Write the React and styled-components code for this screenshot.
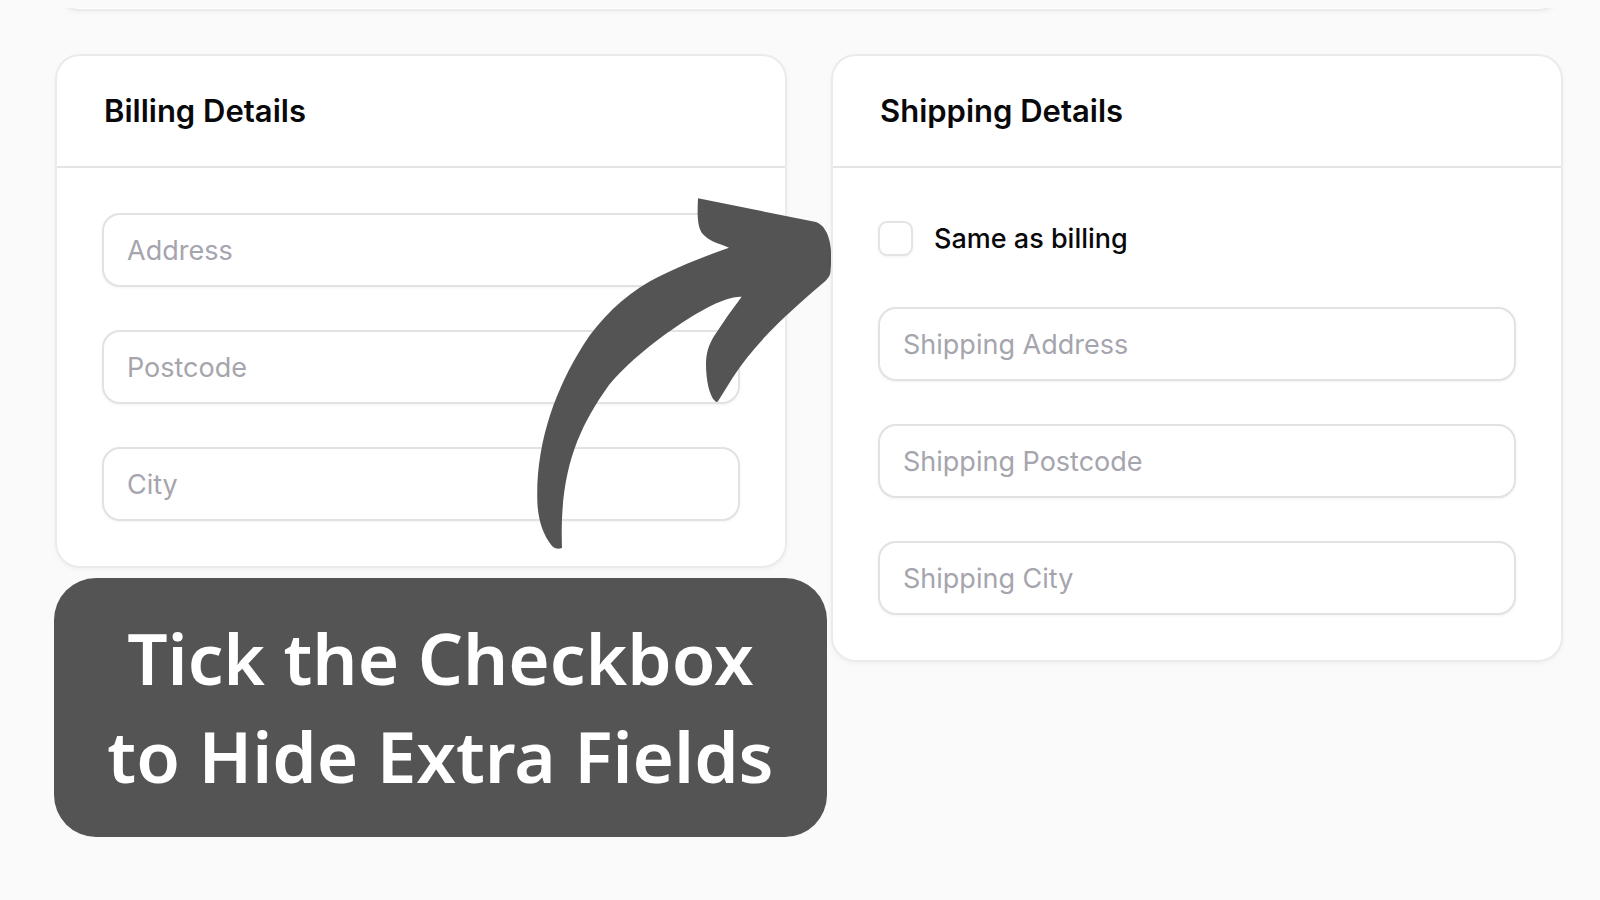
import React from "react";
import styled, { createGlobalStyle } from "styled-components";

const GlobalStyle = createGlobalStyle`
  *, *::before, *::after { box-sizing: border-box; }
  body {
    margin: 0;
    background: #fafafa;
    color: #09090b;
    font-family: Inter, "Liberation Sans", sans-serif;
  }
`;

const Page = styled.main`
  min-height: 100vh;
  padding: 8px 37px 40px 55px;
`;

const Surface = styled.section`
  background: #fff;
  border: 2px solid #ebebec;
  border-radius: 25px;
  box-shadow: 0 2px 4px rgba(0, 0, 0, 0.04);
`;

const PreviousSection = styled.div`
  display: flex;
  align-items: flex-end;
  height: 7px;
  padding-bottom: 4px;
  overflow: hidden;
`;

const PreviousCard = styled(Surface)`
  flex: 1;
  height: 60px;
`;

const Columns = styled.div`
  display: grid;
  grid-template-columns: 1fr 1fr;
  align-items: start;
  gap: 44px;
  margin-top: 39px;
`;

const Column = styled.div`
  position: relative;
  display: flex;
  flex-direction: column;
  gap: 10px;
`;

const CardHeader = styled.header`
  padding: 33px 47px;
  border-bottom: 2px solid #e4e4e5;
`;

const CardTitle = styled.h2`
  margin: 0;
  font-size: 31px;
  font-weight: 600;
  line-height: 44px;
`;

const CardBody = styled.div`
  display: flex;
  flex-direction: column;
  gap: 43px;
  padding: 45px;
`;

const TextField = styled.input`
  width: 100%;
  height: 74px;
  padding: 0 23px;
  border: 2px solid #e2e2e3;
  border-radius: 18px;
  background: #fff;
  box-shadow: 0 1px 3px rgba(0, 0, 0, 0.05);
  color: inherit;
  font: 400 27px Inter, "Liberation Sans", sans-serif;

  &::placeholder {
    color: #a5a5ae;
    opacity: 1;
  }
`;

const CheckRow = styled.label`
  display: flex;
  align-items: center;
  gap: 21px;
  height: 51px;
  font-size: 27px;
  font-weight: 500;
`;

const CheckBox = styled.input`
  appearance: none;
  width: 35px;
  height: 35px;
  margin: 0;
  border: 2px solid #e4e4e5;
  border-radius: 9px;
  background: #fff;
  box-shadow: 0 1px 3px rgba(0, 0, 0, 0.05);

  &:checked {
    background: #09090b;
  }
`;

const Callout = styled.p`
  margin: 0 -40px 0 -1px;
  padding: 31px 0 32px;
  border-radius: 42px;
  background: #545454;
  color: #fff;
  font-family: "Noto Sans", sans-serif;
  font-size: 71px;
  font-weight: 600;
  line-height: 98px;
  text-align: center;
`;

const Arrow = styled.svg`
  position: absolute;
  top: 143px;
  right: -45px;
  width: 296px;
  height: 353px;
  overflow: visible;
  fill: #545454;
  pointer-events: none;
`;

function Field({ label, name }) {
  return <TextField type="text" name={name} placeholder={label} aria-label={label} />;
}

function DetailsCard({ title, children }) {
  return (
    <Surface>
      <CardHeader>
        <CardTitle>{title}</CardTitle>
      </CardHeader>
      <CardBody>{children}</CardBody>
    </Surface>
  );
}

export default function App() {
  return (
    <>
      <GlobalStyle />
      <Page>
        <PreviousSection>
          <PreviousCard />
        </PreviousSection>
        <Columns>
          <Column>
            <DetailsCard title="Billing Details">
              <Field label="Address" name="address" />
              <Field label="Postcode" name="postcode" />
              <Field label="City" name="city" />
            </DetailsCard>
            <Callout>
              Tick the Checkbox
              <br />
              to Hide Extra Fields
            </Callout>
            <Arrow viewBox="48 51 888 1059" aria-hidden="true">
              <path d="M534 55 L884 125 C918 133 934 178 934 232 Q933 262 931 279 Q929 292 912 307 C800 402 704 490 638 593 L594 664 Q590 669 585 663 C568 648 558 600 558 552 C558 518 567 493 581 470 Q622 406 665 350 C612 348 520 402 440 460 C370 511 305 568 267 615 C170 750 118 880 126 1104 Q107 1110 96 1098 C66 1060 54 1015 52 965 C47 790 105 630 190 495 C240 417 310 350 390 304 C455 268 545 232 627 203 C594 189 565 183 545 158 C531 135 532 97 534 55 Z" />
            </Arrow>
          </Column>
          <Column>
            <DetailsCard title="Shipping Details">
              <CheckRow>
                <CheckBox type="checkbox" name="same-as-billing" />
                Same as billing
              </CheckRow>
              <Field label="Shipping Address" name="shipping-address" />
              <Field label="Shipping Postcode" name="shipping-postcode" />
              <Field label="Shipping City" name="shipping-city" />
            </DetailsCard>
          </Column>
        </Columns>
      </Page>
    </>
  );
}
